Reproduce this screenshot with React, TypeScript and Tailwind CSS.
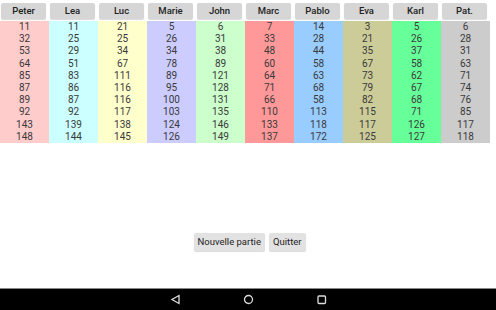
const players = [
    { name: 'Peter', bg: 'bg-[#ffcccc]', scores: [11, 32, 53, 64, 85, 87, 89, 92, 143, 148] },
    { name: 'Lea', bg: 'bg-[#ccffff]', scores: [11, 25, 29, 51, 83, 86, 87, 92, 139, 144] },
    { name: 'Luc', bg: 'bg-[#ffffcc]', scores: [21, 25, 34, 67, 111, 116, 116, 117, 138, 145] },
    { name: 'Marie', bg: 'bg-[#ccccff]', scores: [5, 26, 34, 78, 89, 95, 100, 103, 124, 126] },
    { name: 'John', bg: 'bg-[#ccffcc]', scores: [6, 31, 38, 89, 121, 128, 131, 135, 146, 149] },
    { name: 'Marc', bg: 'bg-[#ff9999]', scores: [7, 33, 48, 60, 64, 71, 66, 110, 133, 137] },
    { name: 'Pablo', bg: 'bg-[#99ccff]', scores: [14, 28, 44, 58, 63, 68, 58, 113, 118, 172] },
    { name: 'Eva', bg: 'bg-[#cccc99]', scores: [3, 21, 35, 67, 73, 79, 82, 115, 117, 125] },
    { name: 'Karl', bg: 'bg-[#66ff99]', scores: [5, 26, 37, 58, 62, 67, 68, 71, 126, 127] },
    { name: 'Pat.', bg: 'bg-[#cccccc]', scores: [6, 28, 31, 63, 71, 74, 76, 85, 117, 118] },
];

export default function App() {
    return (
        <div className="w-[496px] h-[310px] bg-white flex flex-col font-['Roboto',sans-serif] overflow-hidden">
            <div className="flex w-[490px]">
                {players.map((p) => (
                    <div key={p.name} className="w-[49px] flex flex-col">
                        <div className="h-[21px] pt-[3px] pb-[2px] pl-[1px] pr-[3px]">
                            <div className="h-[16px] rounded-[2px] bg-[#d6d6d6] shadow-[0_1px_1px_rgba(0,0,0,0.15)] flex items-center justify-center text-[9.5px] font-medium text-[#222]">
                                {p.name}
                            </div>
                        </div>
                        <div className={`${p.bg} flex flex-col`}>
                            {p.scores.map((s, i) => (
                                <div key={i} className="h-[12.2px] leading-[12.2px] text-center text-[10px] text-[#3a3a3a]">
                                    {s}
                                </div>
                            ))}
                        </div>
                    </div>
                ))}
            </div>

            <div className="flex-1 flex items-end justify-center gap-[4px] pb-[37px] pl-[3px]">
                <button className="h-[18px] px-[4px] rounded-[2px] bg-[#e2e2e2] shadow-[0_1px_1px_rgba(0,0,0,0.15)] text-[9.5px] text-[#222]">
                    Nouvelle partie
                </button>
                <button className="h-[18px] px-[4px] rounded-[2px] bg-[#e2e2e2] shadow-[0_1px_1px_rgba(0,0,0,0.15)] text-[9.5px] text-[#222]">
                    Quitter
                </button>
            </div>

            <div className="h-[22px] bg-black border-t border-[#888] flex items-center justify-center gap-[62px]">
                <svg width="11" height="11" viewBox="0 0 11 11" fill="none" stroke="#ddd" strokeWidth="1.3">
                    <path d="M9 1.5 L2 5.5 L9 9.5 Z" />
                </svg>
                <svg width="11" height="11" viewBox="0 0 11 11" fill="none" stroke="#ddd" strokeWidth="1.3">
                    <circle cx="5.5" cy="5.5" r="4" />
                </svg>
                <svg width="11" height="11" viewBox="0 0 11 11" fill="none" stroke="#ddd" strokeWidth="1.3">
                    <rect x="2" y="2" width="7.5" height="7.5" rx="1" />
                </svg>
            </div>
        </div>
    );
}
